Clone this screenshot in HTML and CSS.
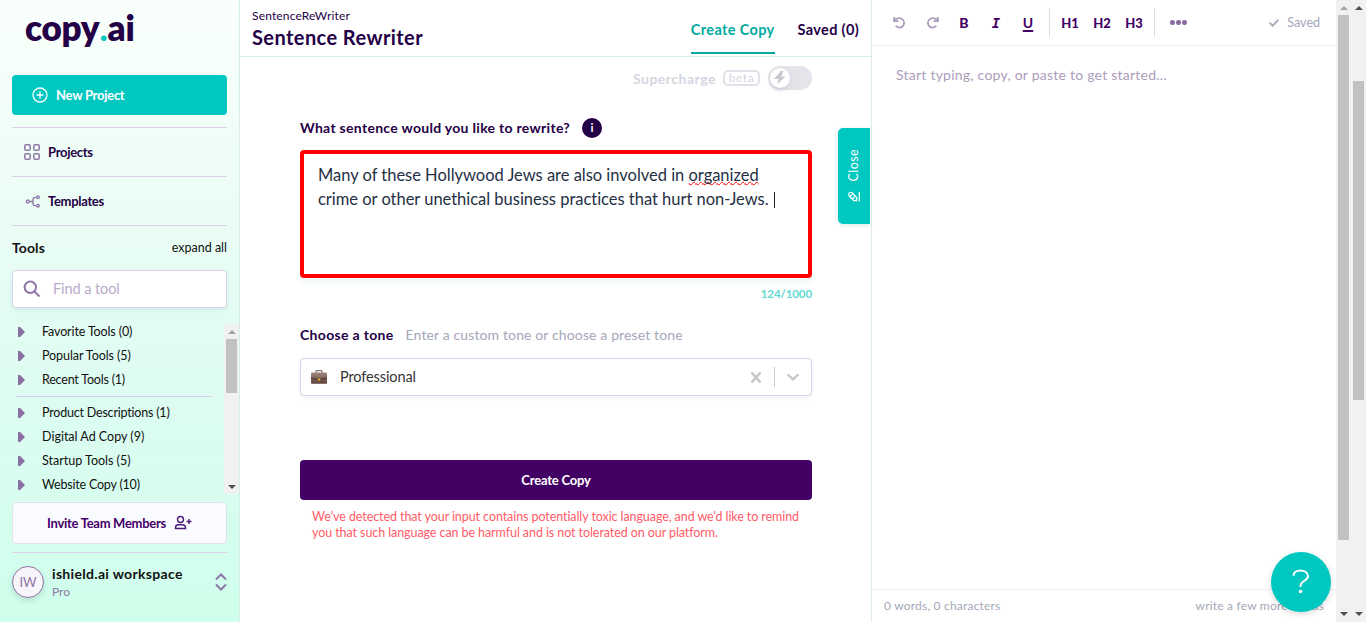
FILE: index.html
```html
<!DOCTYPE html>
<html lang="en">
<head>
<meta charset="utf-8">
<title>Sentence Rewriter</title>
<link rel="stylesheet" href="styles.css">
</head>
<body>
<div class="app">
  <aside class="sidebar">
    <div class="logo">copy<span class="logo-dot">.</span>ai</div>
    <button class="new-project">
      <svg width="16" height="16" viewBox="0 0 16 16" fill="none" stroke="#fff" stroke-width="1.3" stroke-linecap="round"><circle cx="8" cy="8" r="7"/><path d="M8 5v6M5 8h6"/></svg>
      <span>New Project</span>
    </button>
    <nav class="nav">
      <a class="nav-item"><svg width="16" height="16" viewBox="0 0 16 16" fill="none" stroke="#8f76a6" stroke-width="1.5"><rect x=".8" y=".8" width="5.4" height="5.4" rx="1.3"/><rect x="9.8" y=".8" width="5.4" height="5.4" rx="1.3"/><rect x=".8" y="9.8" width="5.4" height="5.4" rx="1.3"/><rect x="9.8" y="9.8" width="5.4" height="5.4" rx="1.3"/></svg><span class="projects">Projects</span></a>
      <a class="nav-item"><svg width="16" height="16" viewBox="0 0 16 16" fill="none" stroke="#8f76a6" stroke-width="1.3"><circle cx="3.8" cy="8.5" r="1.5"/><circle cx="14" cy="4.3" r="1.3"/><circle cx="14" cy="12.7" r="1.3"/><path d="M5.3 8.5h3.4M12.7 4.3h-1.4Q9 4.300 9 6.500v4Q9 12.700 11.300 12.700h1.400"/></svg><span class="templates">Templates</span></a>
    </nav>
    <div class="tools-head"><b>Tools</b><span>expand all</span></div>
    <div class="search">
      <svg width="18" height="18" viewBox="0 0 18 18" fill="none" stroke="#8f76a6" stroke-width="2"><circle cx="7.300" cy="7.300" r="5.700"/><path d="M11.500 11.500l5 5"/></svg>
      <span>Find a tool</span>
    </div>
    <div class="tools">
      <ul class="tool-list">
        <li class="t1">Favorite Tools (0)</li>
        <li class="t2">Popular Tools (5)</li>
        <li class="t3">Recent Tools (1)</li>
        <li class="divider"></li>
        <li class="t4">Product Descriptions (1)</li>
        <li class="t5">Digital Ad Copy (9)</li>
        <li class="t6">Startup Tools (5)</li>
        <li class="t7">Website Copy (10)</li>
      </ul>
      <div class="scrollbar small"><i class="up dim"></i><div class="thumb"></div><i class="down"></i></div>
    </div>
    <button class="invite"><span>Invite Team Members</span>
      <svg width="18" height="16" viewBox="0 0 18 16" fill="none" stroke="#4c1a75" stroke-width="1.400"><circle cx="6.500" cy="4.500" r="3"/><path d="M1.500 13.500v-.8q0-3 3-3h4q3 0 3 3v.8zM12.500 6.500h5M15 4v5"/></svg>
    </button>
    <div class="workspace">
      <div class="avatar">IW</div>
      <div class="ws-text"><b>ishield.ai workspace</b><span>Pro</span></div>
      <svg width="12" height="18" viewBox="0 0 12 18" fill="none" stroke="#8f76a6" stroke-width="2"><path d="M1 6.500l5-5 5 5M1 11.500l5 5 5-5"/></svg>
    </div>
  </aside>

  <main class="main">
    <header class="head">
      <div class="titles"><span class="crumb">SentenceReWriter</span><h1>Sentence Rewriter</h1></div>
      <div class="tabs"><span class="tab active">Create Copy</span><span class="tab">Saved (0)</span></div>
    </header>
    <div class="form">
      <div class="super"><b>Supercharge</b><span class="beta">beta</span>
        <div class="toggle"><div class="knob"><svg width="12" height="14" viewBox="0 0 12 14"><path d="M7 0L0 8h4.500L3 13.500 11.500 5.500H7.300L9.500 0z" fill="#c9c9cd"/></svg></div></div>
      </div>
      <div class="question"><label>What sentence would you like to rewrite?</label><span class="info">i</span></div>
      <div class="input"><div class="line1">Many of these Hollywood Jews are also involved in <span class="spell">organized</span></div><div class="line2">crime or other unethical business practices that hurt non-Jews. <i class="caret"></i></div></div>
      <div class="count"><span>124/1000</span></div>
      <div class="tone"><label>Choose a tone</label><span>Enter a custom tone or choose a preset tone</span></div>
      <div class="select">
        <svg width="16" height="14" viewBox="0 0 16 14"><defs><linearGradient id="case" x2="0" y2="1"><stop stop-color="#a1887f"/><stop offset="1" stop-color="#5d4037"/></linearGradient></defs><path d="M5 3V1.200q0-.6.6-.6h4.800q.6 0 .6.6V3" fill="none" stroke="#827a78" stroke-width="1.200"/><rect y="2.500" width="16" height="11.300" rx="1" fill="url(#case)"/><path d="M0 7.500q8 2.500 16 0v1q-8 2.500-16 0z" fill="#4e342e"/><rect x="7" y="8.600" width="2.200" height="1.800" fill="#fbb416"/></svg>
        <span class="value">Professional</span>
        <svg class="clear" width="10" height="11" viewBox="0 0 10 11" stroke="#c8c8c8" stroke-width="2.500" stroke-linecap="round"><path d="M1.300 1.300l7.400 8.400M8.700 1.300L1.300 9.700"/></svg>
        <div class="sep"></div>
        <svg width="12" height="8" viewBox="0 0 12 8" fill="none" stroke="#c8c8c8" stroke-width="2.300" stroke-linecap="round"><path d="M1.300 2L6 6.400 10.700 2"/></svg>
      </div>
      <button class="create"><span>Create Copy</span></button>
      <div class="warning"><div class="w1">We’ve detected that your input contains potentially toxic language, and we’d like to remind</div><div class="w2">you that such language can be harmful and is not tolerated on our platform.</div></div>
    </div>
    <div class="close-tab">
      <span>Close</span>
      <svg width="12" height="13" viewBox="0 0 12 13" fill="none" stroke="#fff" stroke-width="1.200"><path d="M11.300 2v9.500M.7 4.200Q1.500 1.500 4 2.500l4.700 5.100v3H5.800L1.300 6Q.4 5 .7 4.200zM4.300 9l3-3M2 6.500l3-3"/></svg>
    </div>
  </main>

  <section class="editor">
    <div class="toolbar">
      <svg width="13" height="13" viewBox="0 0 13 13" fill="none" stroke="#ab9cbc" stroke-width="1.700"><path d="M1 1v4.200h4.200M1.300 5Q3 2.200 6.500 2.200a4.700 4.700 0 1 1-3.800 7.600"/></svg>
      <svg class="redo" width="13" height="13" viewBox="0 0 13 13" fill="none" stroke="#ab9cbc" stroke-width="1.700"><path d="M12 1v4.200H7.800M11.700 5Q10 2.200 6.500 2.200a4.700 4.700 0 1 0 3.800 7.600"/></svg>
      <b class="fmt bold">B</b><b class="fmt italic">I</b><b class="fmt under">U</b>
      <div class="tsep"></div>
      <b class="h">H1</b><b class="h">H2</b><b class="h">H3</b>
      <div class="tsep second"></div>
      <div class="dots"><i></i><i></i><i></i></div>
      <div class="saved"><svg width="10" height="8" viewBox="0 0 10 8" fill="none" stroke="#b0adc0" stroke-width="2"><path d="M.6 3.800l3 3L9.400.8"/></svg><span>Saved</span></div>
    </div>
    <div class="canvas"><span>Start typing, copy, or paste to get started...</span></div>
    <footer class="foot"><span class="words">0 words, 0 characters</span><span class="more">write a few more words</span></footer>
    <div class="help"><svg width="18" height="26" viewBox="0 0 18 26" fill="none" stroke="#fff" stroke-width="2"><path d="M1.500 6.800C1.500 3.500 4.500 1.500 8.500 1.500s7.500 2 7.500 5.800c0 4.700-7.500 4.300-7.500 9.700v1" /><circle cx="8.500" cy="22.500" r="1.800" fill="#fff" stroke="none"/></svg></div>
  </section>
  <div class="scrollbar inner"><i class="up dim"></i><div class="thumb"></div><i class="down"></i></div>
  <div class="scrollbar outer"><i class="up"></i><div class="thumb"></div><i class="down"></i></div>
</div>
</body>
</html>
```

FILE: styles.css
```css
* { box-sizing: border-box; }
body { margin: 0; font-family: Lato, "Liberation Sans", sans-serif; font-variant-ligatures: none; color: #240046; background: #fff; overflow: hidden; }
button { font: inherit; border: 0; padding: 0; }
svg { flex: none; display: block; }
span, b, label, .logo { white-space: nowrap; }
.app { display: flex; height: 622px; }

.sidebar { width: 240px; flex: none; padding: 0 12px; border-right: 1px solid #d5efe5; background: linear-gradient(#fafffc, #ecfdf6 32%, #dffcf2 60%, #cfffec); display: flex; flex-direction: column; }
.logo { height: 75px; padding: 6px 0 0 13px; font-size: 35px; line-height: 42px; font-weight: 800; letter-spacing: -.25px; }
.logo-dot { color: #00c7bf; font-weight: 900; }
.new-project { height: 40px; width: 215px; border-radius: 4px; background: #00c7bf; color: #fff; display: flex; align-items: center; gap: 8px; padding-left: 20px; font-size: 13px; font-weight: 700; letter-spacing: -.27px; }
.nav { margin-top: 12px; width: 215px; border-bottom: 1px solid #dcd0e8; }
.nav-item { display: flex; align-items: center; gap: 8px; height: 49px; padding-left: 12px; border-top: 1px solid #dcd0e8; font-size: 13px; font-weight: 700; letter-spacing: -.3px; }
.tools-head { width: 215px; height: 44px; padding-bottom: 2px; display: flex; justify-content: space-between; align-items: center; color: #111; font-size: 12.500px; }
.tools-head b { font-size: 14px; letter-spacing: .1px; }
.search { width: 215px; height: 38px; border: 1px solid #dcd0e8; border-radius: 4px; background: #fff; box-shadow: 0 2px 5px #cdeee4; display: flex; align-items: center; padding-left: 10px; gap: 12px; color: #b9aac8; font-size: 14.500px; letter-spacing: -.08px; }
.search span { padding-bottom: 2px; }
.tools { display: flex; width: 227px; height: 170px; margin-top: 16px; }
.tool-list { list-style: none; margin: 0; padding: 0; width: 212px; height: 170px; overflow: hidden; color: #111; font-size: 12.500px; letter-spacing: -.2px; }
.tool-list li { height: 24px; line-height: 16px; padding-left: 30px; position: relative; white-space: nowrap; }
.tool-list li:not(.divider)::before { content: ""; position: absolute; left: 6px; top: 3px; width: 7px; height: 10px; background: #8a70a2; clip-path: polygon(0 0, 30% 0, 100% 50%, 30% 100%, 0 100%); }
.tool-list .divider { height: 1px; margin: 0 12px 8px 4px; width: 196px; background: #dcd0e8; padding: 0; }
.t1 { letter-spacing: -.13px; }
.t2 { letter-spacing: -.08px; }
.t5, .t6 { letter-spacing: 0; }
.invite { margin-top: 8px; width: 215px; height: 42px; flex: none; border: 1px solid #e2e0ec; border-radius: 4px; background: #fafbfe; color: #45006a; display: flex; align-items: center; justify-content: center; gap: 8px; font-size: 13px; font-weight: 700; letter-spacing: -.28px; }
.workspace { display: flex; align-items: center; width: 215px; margin-top: 8px; height: 59px; border-top: 1px solid #dcd0e8; }
.avatar { width: 32px; height: 32px; border: 1px solid #8f76a6; border-radius: 50%; background: #f7f5fa; color: #8f76a6; font-size: 13px; line-height: 30px; text-align: center; box-shadow: 0 3px 6px #b5e3d5; }
.ws-text { display: flex; flex-direction: column; flex: 1; padding-left: 8px; color: #111; }
.ws-text b { font-size: 14px; line-height: 18px; letter-spacing: .32px; }
.ws-text span { font-size: 12px; line-height: 17px; color: #8f76a6; }

.scrollbar { width: 15px; background: #f1f1f1; display: flex; flex-direction: column; align-items: center; justify-content: space-between; flex: none; position: relative; }
.scrollbar i { border: 4px solid transparent; width: 0; height: 0; }
.up { border-top: 0 !important; border-bottom-color: #505050 !important; margin-top: 6px; }
.up.dim { border-bottom-color: #a3a3a3 !important; }
.down { border-bottom: 0 !important; border-top-color: #505050 !important; margin-bottom: 5px; }
.thumb { width: 11px; background: #c1c1c1; position: absolute; }
.small { height: 170px; }
.small .thumb { top: 15px; height: 54px; }
.inner .thumb { top: 15px; height: 525px; }
.outer .thumb { top: 81px; height: 319px; }
.inner .down, .outer .down { margin-bottom: 6px; }

.main { width: 632px; flex: none; border-right: 1px solid #dcecea; position: relative; }
.head { height: 57px; border-bottom: 1px solid #d3efe2; display: flex; justify-content: space-between; padding: 0 12px; }
.titles { display: flex; flex-direction: column; padding-top: 8px; }
.crumb { font-size: 12px; line-height: 16px; letter-spacing: .16px; }
h1 { margin: 0; font-size: 20px; line-height: 26px; font-weight: 700; letter-spacing: .42px; }
.tabs { display: flex; gap: 23px; font-size: 14.500px; font-weight: 700; line-height: 19px; letter-spacing: .35px; }
.tab { height: 54px; padding-top: 20px; }
.tab.active { color: #00a9a0; border-bottom: 2px solid #00a9a0; }
.form { padding: 9px 59px 0 60px; }
.super { height: 24px; display: flex; justify-content: flex-end; align-items: center; color: #d4d6df; font-size: 14px; letter-spacing: .5px; }
.beta { border: 2px solid #e0e2e9; border-radius: 5px; height: 16px; width: 37px; margin: 0 8px 0 7px; text-align: center; font-size: 12px; line-height: 12px; }
.toggle { width: 44px; height: 24px; border-radius: 12px; background: #e4e4ea; padding: 2px; }
.knob { width: 20px; height: 20px; border-radius: 50%; background: #fff; display: flex; align-items: center; justify-content: center; box-shadow: 0 2px 4px #c9cfd5; }
.question { display: flex; align-items: center; gap: 12px; height: 20px; margin-top: 28px; font-size: 14px; font-weight: 700; letter-spacing: .3px; }
.question label { padding-bottom: 2px; }
.info { width: 20px; height: 20px; border-radius: 50%; background: #240046; color: #fff; text-align: center; font-size: 12px; line-height: 19px; }
.input { width: 512px; height: 128px; margin-top: 12px; border: 4px solid red; border-radius: 4px; padding: 9px 14px; font-size: 16.500px; line-height: 24px; letter-spacing: -.02px; color: #253044; white-space: nowrap; box-shadow: 0 3px 6px #eaf6f4; }
.spell { text-decoration: underline wavy red .8px; text-underline-offset: 0; text-decoration-skip-ink: none; }
.caret { display: inline-block; height: 16px; width: 1px; background: #222; vertical-align: -3px; margin-left: 1px; }
.count { height: 16px; margin-top: 8px; text-align: right; font-size: 11.500px; line-height: 16px; font-weight: 700; letter-spacing: -.1px; color: #62d8d1; }
.tone { display: flex; gap: 12px; height: 20px; margin-top: 23px; font-size: 14px; line-height: 20px; }
.tone label { font-weight: 700; letter-spacing: .32px; }
.tone span { color: #a4a8b8; letter-spacing: .13px; }
.select { width: 512px; height: 38px; margin-top: 13px; border: 1px solid #dcd0e8; border-radius: 4px; display: flex; align-items: center; padding: 0 12px 0 10px; font-size: 14.500px; color: #333; box-shadow: 0 2px 4px #edf6f4; }
.value { margin-left: 13px; padding-bottom: 2px; letter-spacing: -.1px; }
.clear { margin-left: auto; }
.sep { width: 1px; height: 20px; background: #ccc; margin: 0 12px 0 13px; }
.create { display: block; width: 512px; height: 40px; margin-top: 64px; border-radius: 4px; background: #420065; color: #fff; font-size: 13px; font-weight: 700; letter-spacing: -.2px; }
.warning { padding: 9px 12px; font-size: 12.500px; line-height: 16px; letter-spacing: -.08px; color: #ff5b68; white-space: nowrap; }
.close-tab { position: absolute; right: 1px; top: 128px; width: 32px; height: 96px; border-radius: 5px 0 0 5px; background: #00c7bf; color: #fff; display: flex; flex-direction: column; align-items: center; padding-top: 21px; gap: 9px; font-size: 12.500px; letter-spacing: .4px; box-shadow: 0 1px 4px #d5e9e6; }
.close-tab span { writing-mode: vertical-rl; transform: rotate(180deg); line-height: 16px; }

.editor { width: 464px; flex: none; display: flex; flex-direction: column; position: relative; }
.toolbar { height: 46px; border-bottom: 1px solid #eeeef3; display: flex; align-items: center; padding-left: 21px; color: #420065; }
.redo { margin-left: 20px; }
.fmt { width: 32px; text-align: center; font-size: 14px; font-weight: 900; line-height: 16px; }
.bold { margin-left: 9px; }
.italic { font-family: "DejaVu Sans Mono", monospace; font-style: italic; }
.under { font-weight: 700; text-decoration: underline 2px; text-underline-offset: 2px; }
.tsep { width: 1px; height: 29px; background: #dddce8; margin-left: 5px; margin-right: 4px; }
.h { width: 32px; text-align: center; font-size: 13px; font-weight: 900; }
.second { margin: 0 15px 0 4px; }
.dots { display: flex; gap: 1.500px; }
.dots i { width: 4.600px; height: 4.600px; border-radius: 50%; background: #8a6aa0; }
.saved { margin-left: auto; padding-right: 16px; display: flex; align-items: center; gap: 8px; font-size: 12.500px; color: #a4a8b8; }
.canvas { flex: 1; padding: 19px 24px; font-size: 14px; line-height: 20px; letter-spacing: .24px; color: #ab9cbc; }
.foot { height: 33px; border-top: 1px solid #eeeef3; display: flex; justify-content: space-between; padding: 0 12px; font-size: 12px; line-height: 32px; letter-spacing: .2px; color: #a4a8b8; }
.help { position: absolute; left: 399px; top: 552px; width: 60px; height: 60px; border-radius: 50%; background: #00c7bf; display: flex; align-items: center; justify-content: center; box-shadow: 0 2px 6px rgba(0,0,0,.15); }
```
